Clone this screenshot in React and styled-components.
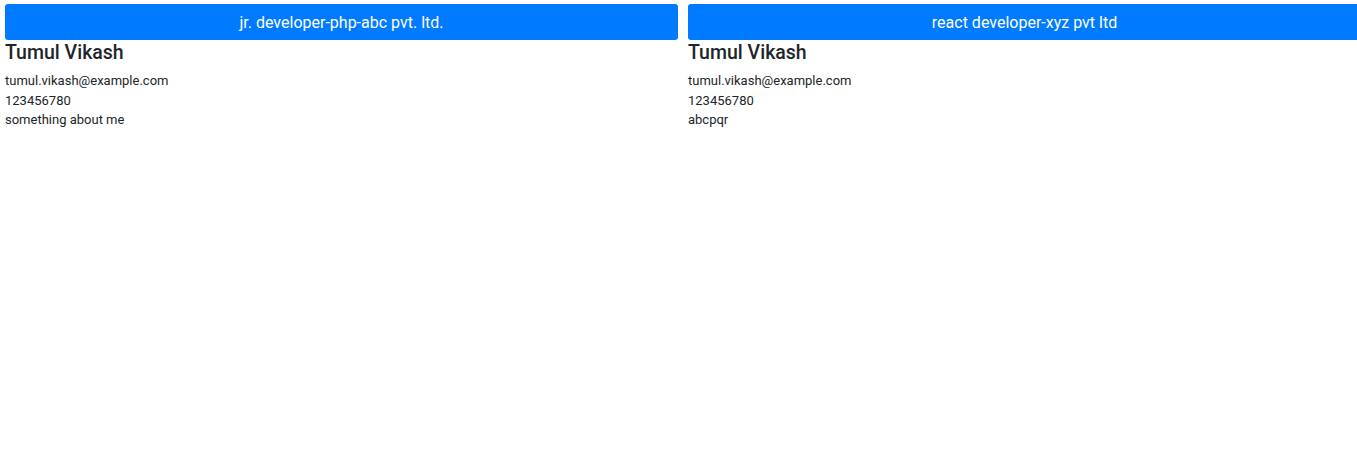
import React from "react";
import styled, { createGlobalStyle } from "styled-components";

const GlobalStyle = createGlobalStyle`
  body {
    margin: 0;
    font-family: Roboto, "Liberation Sans", sans-serif;
    color: #212529;
    background: #fff;
  }
`;

const Row = styled.div`
  display: flex;
  gap: 10px;
  padding: 4px 0 0 5px;
`;

const Card = styled.div`
  flex: 0 0 673px;
  width: 673px;
`;

const Title = styled.button`
  display: block;
  width: 100%;
  height: 36px;
  border: none;
  border-radius: 3px;
  background: #007bff;
  color: #fff;
  font-family: inherit;
  font-size: 16px;
  cursor: pointer;
`;

const Name = styled.h2`
  margin: 0;
  padding-top: 1px;
  font-size: 19.5px;
  font-weight: 500;
  line-height: 24px;
`;

const Details = styled.div`
  margin-top: 6px;
  font-size: 13px;
  line-height: 19.5px;

  & p {
    margin: 0;
  }
`;

const experiences = [
  {
    title: "jr. developer-php-abc pvt. ltd.",
    name: "Tumul Vikash",
    email: "tumul.vikash@example.com",
    phone: "123456780",
    about: "something about me",
  },
  {
    title: "react developer-xyz pvt ltd",
    name: "Tumul Vikash",
    email: "tumul.vikash@example.com",
    phone: "123456780",
    about: "abcpqr",
  },
];

const App = () => {
  return (
    <>
      <GlobalStyle />
      <Row>
        {experiences.map((exp, idx) => (
          <Card key={idx}>
            <Title>{exp.title}</Title>
            <Name>{exp.name}</Name>
            <Details>
              <p>{exp.email}</p>
              <p>{exp.phone}</p>
              <p>{exp.about}</p>
            </Details>
          </Card>
        ))}
      </Row>
    </>
  );
};

export default App;
